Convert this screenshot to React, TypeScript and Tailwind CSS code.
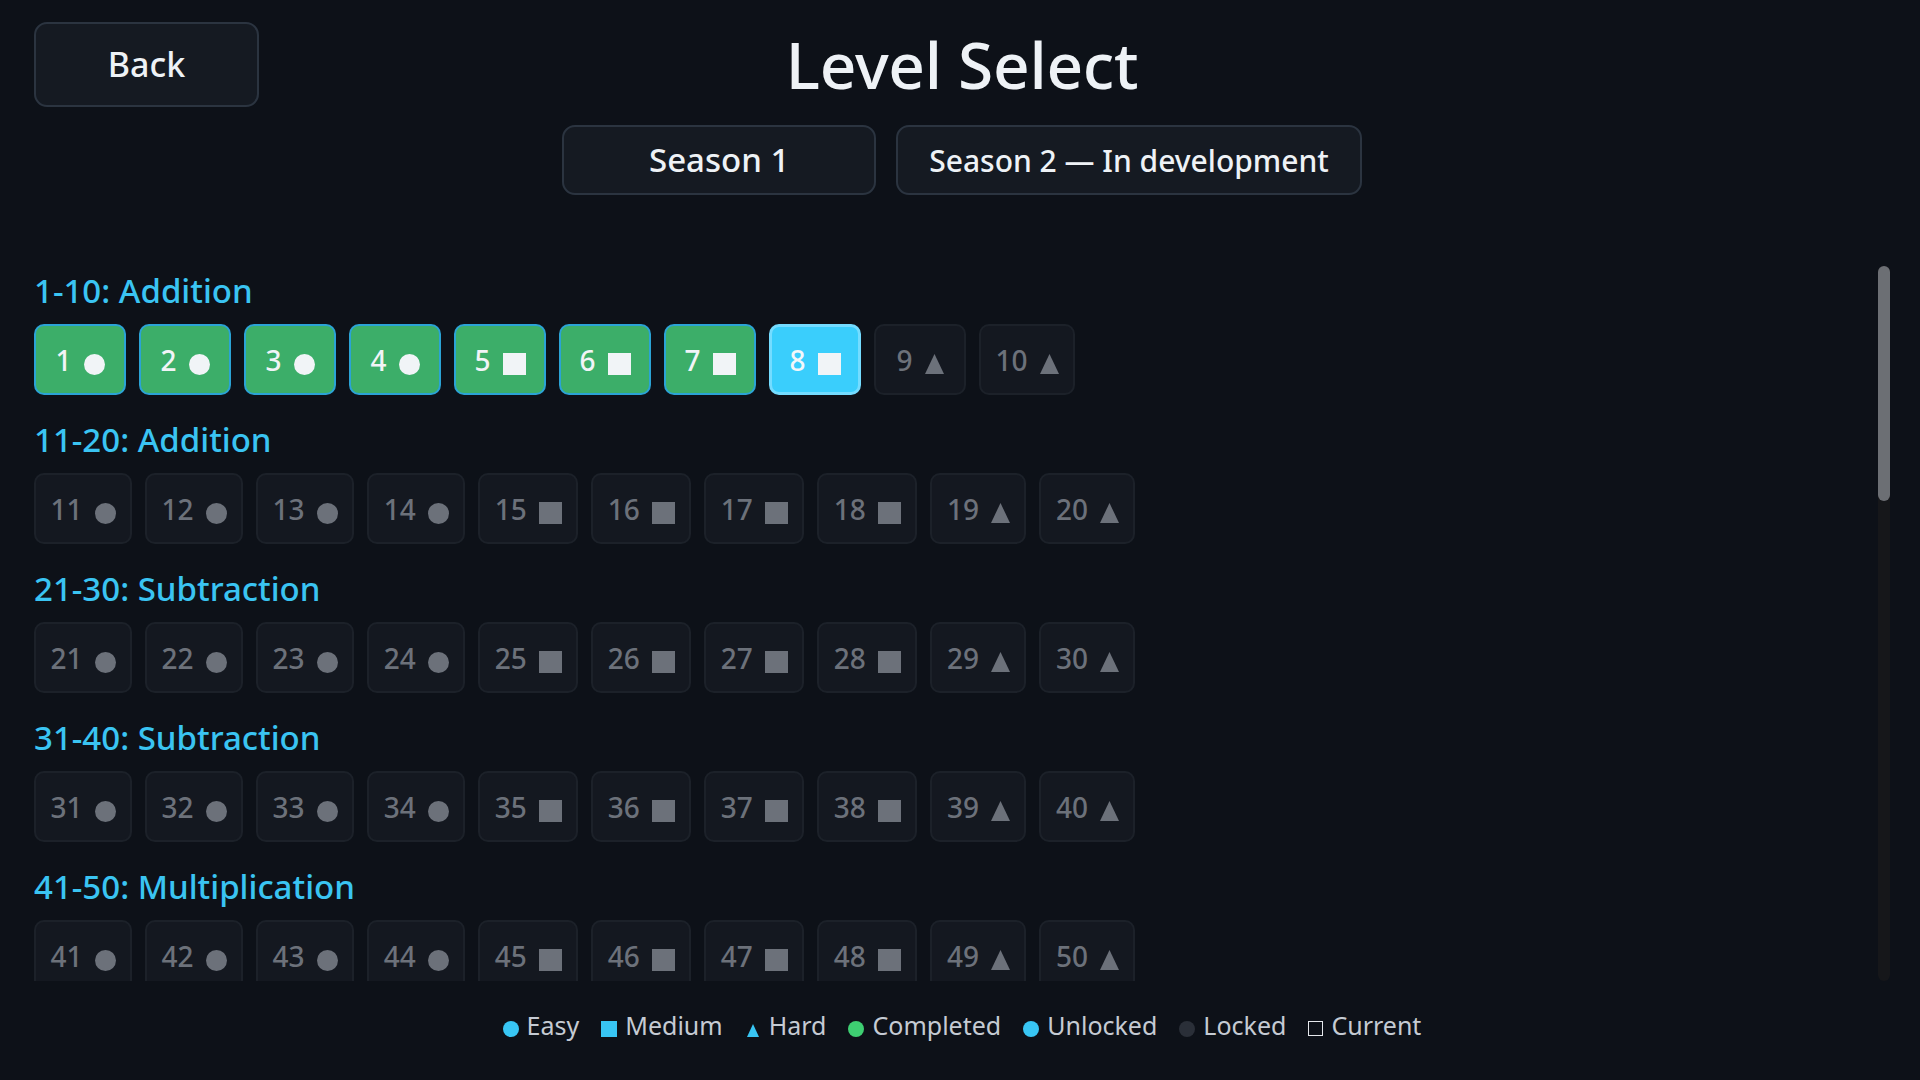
import React from 'react';

type Kind = 'easy' | 'medium' | 'hard';
type State = 'completed' | 'current' | 'locked';

const TOPICS = [
  'Addition',
  'Addition',
  'Subtraction',
  'Subtraction',
  'Multiplication',
  'Multiplication',
  'Division',
  'Division',
  'Mixed Operations',
  'Mixed Operations',
  'Fractions',
  'Fractions',
  'Challenge',
  'Challenge',
];

const CURRENT_LEVEL = 8;

const kindFor = (i: number): Kind => (i < 4 ? 'easy' : i < 8 ? 'medium' : 'hard');

const stateFor = (n: number): State =>
  n < CURRENT_LEVEL ? 'completed' : n === CURRENT_LEVEL ? 'current' : 'locked';

const Shape = ({ kind, color }: { kind: Kind; color: string }) => {
  if (kind === 'hard') {
    return (
      <svg width="19" height="21" viewBox="0 0 19 21" className={`mt-[8px] shrink-0 ${color}`}>
        <polygon points="9.5,1 19,21 0,21" fill="currentColor" />
      </svg>
    );
  }
  if (kind === 'medium') {
    return <span className={`mt-[9px] block w-[23px] h-[22px] shrink-0 bg-current ${color}`} />;
  }
  return <span className={`mt-[9px] block w-[21px] h-[21px] shrink-0 rounded-full bg-current ${color}`} />;
};

const TILE_STYLES: Record<State, string> = {
  completed: 'bg-[#3cae69] border-2 border-[#2ba3d5] text-[#f1f4f7]',
  current: 'bg-[#3acefc] border-[3px] border-[#74dcff] text-[#f4f7fa]',
  locked: 'bg-[#141820] border-2 border-[#1c2129] text-[#6c717a]',
};

const LevelTile = ({ n, kind }: { n: number; kind: Kind }) => {
  const state = stateFor(n);
  return (
    <button
      type="button"
      className={`h-[71px] min-w-[92px] px-[14.5px] rounded-[10px] flex items-center justify-center gap-3 ${TILE_STYLES[state]}`}
    >
      <span className="text-[28px] leading-none font-medium">{n}</span>
      <Shape kind={kind} color={state === 'locked' ? 'text-[#6c717a]' : 'text-[#f1f4f7]'} />
    </button>
  );
};

const LegendItem = ({ marker, label }: { marker: React.ReactNode; label: string }) => (
  <div className="flex items-center gap-[8px]">
    {marker}
    <span>{label}</span>
  </div>
);

export default function App() {
  return (
    <div
      className="h-screen w-full bg-[#0d1118] text-[#eef2f6] flex flex-col pl-[34px] pr-[30px] overflow-hidden"
      style={{ fontFamily: '"Noto Sans", "Open Sans", sans-serif' }}
    >
      {/* Header */}
      <div className="pt-[22px] grid grid-cols-[1fr_auto_1fr] items-center">
        <div>
          <button
            type="button"
            className="w-[225px] h-[85px] rounded-[13px] bg-[#151a22] border-2 border-[#2b3440] text-[34px] font-medium"
          >
            Back
          </button>
        </div>
        <h1 className="text-[64px] font-medium leading-none tracking-[-0.3px]">Level Select</h1>
        <div />
      </div>

      <div className="mt-[18px] flex justify-center gap-[20px]">
        <button
          type="button"
          className="h-[70px] w-[314px] rounded-[13px] bg-[#151a22] border-2 border-[#2b3440] text-[33px] font-medium"
        >
          Season 1
        </button>
        <button
          type="button"
          className="h-[70px] px-[31px] rounded-[13px] bg-[#151a22] border-2 border-[#2b3440] text-[30px] font-medium"
        >
          Season 2 — In development
        </button>
      </div>

      {/* Levels + scroll indicator */}
      <div className="mt-[71px] flex-1 min-h-0 flex">
        <div className="flex-1 min-w-0 overflow-y-auto pt-[5px] pb-[60px] [scrollbar-width:none]">
          {TOPICS.map((topic, s) => {
            const start = s * 10 + 1;
            return (
              <section key={s} className="mb-[25px]">
                <h2 className="text-[33px] leading-[40px] font-medium text-[#3ac4f2] mb-[13px]">
                  {start}-{start + 9}: {topic}
                </h2>
                <div className="flex gap-[13px]">
                  {Array.from({ length: 10 }, (_, i) => (
                    <LevelTile key={i} n={start + i} kind={kindFor(i)} />
                  ))}
                </div>
              </section>
            );
          })}
        </div>
        <div className="w-[12px] shrink-0 rounded-full bg-[#16171a] flex flex-col">
          <div className="h-[235px] rounded-full bg-[#6c6f74]" />
        </div>
      </div>

      {/* Legend */}
      <div className="h-[99px] shrink-0 flex items-center justify-center gap-[22px] pb-[10px] text-[25px] text-[#c5cbd3]">
        <LegendItem marker={<span className="mt-[7px] w-4 h-4 rounded-full bg-[#38c6f4]" />} label="Easy" />
        <LegendItem marker={<span className="mt-[6px] w-4 h-4 bg-[#38c6f4]" />} label="Medium" />
        <LegendItem
          marker={
            <svg width="16" height="16" viewBox="0 0 16 16" className="mt-[6px] text-[#38c6f4]">
              <polygon points="8,3 14,16 2,16" fill="currentColor" />
            </svg>
          }
          label="Hard"
        />
        <LegendItem marker={<span className="mt-[7px] w-4 h-4 rounded-full bg-[#3ecf72]" />} label="Completed" />
        <LegendItem marker={<span className="mt-[7px] w-4 h-4 rounded-full bg-[#38c6f4]" />} label="Unlocked" />
        <LegendItem marker={<span className="mt-[7px] w-4 h-4 rounded-full bg-[#2a2f38]" />} label="Locked" />
        <LegendItem
          marker={<span className="mt-[6px] w-[15px] h-[15px] border-[1.5px] border-[#e5e8ec]" />}
          label="Current"
        />
      </div>
    </div>
  );
}
